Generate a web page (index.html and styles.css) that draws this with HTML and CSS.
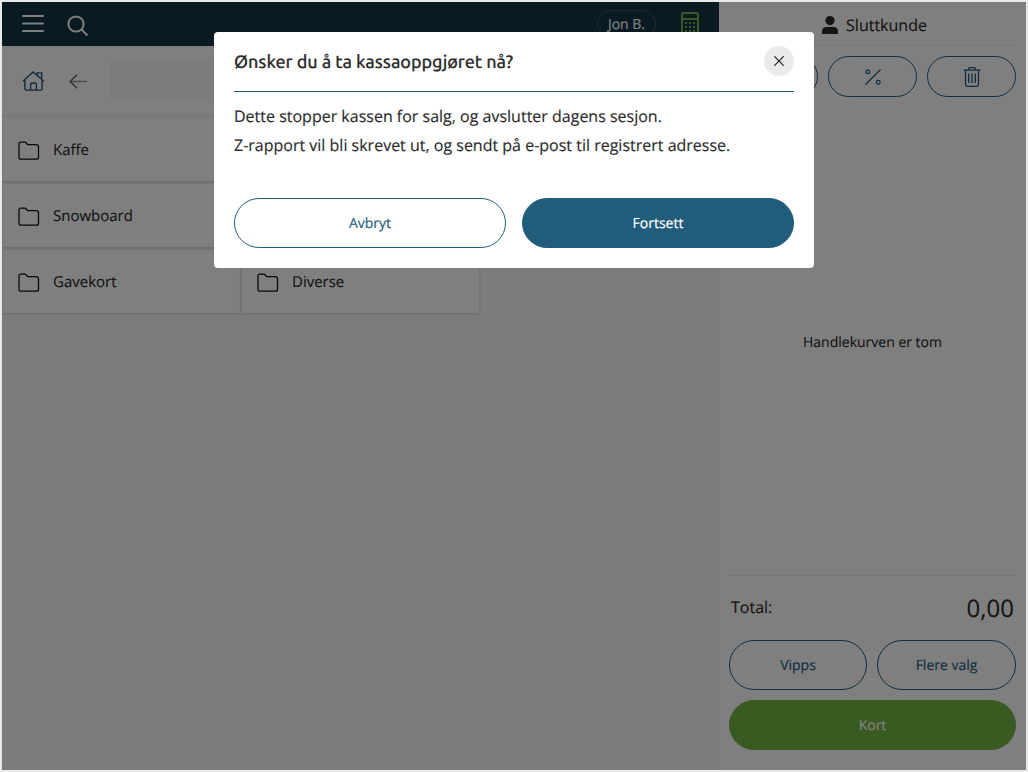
FILE: index.html
```html
<!DOCTYPE html>
<html lang="no">
<head>
<meta charset="utf-8">
<title>Kasse</title>
<link rel="stylesheet" href="styles.css">
</head>
<body>
<div class="app">
  <main class="shop">
    <header class="topbar">
      <svg class="menu" viewBox="0 0 22 20"><path d="M1 2h20M1 9.500h20M1 17h20"/></svg>
      <svg class="search" viewBox="0 0 22 22"><circle cx="9" cy="9" r="7.600"/><path d="M14.500 14.500L20.500 20.500"/></svg>
      <span class="user">Jon B.</span>
      <svg class="register" viewBox="0 0 18 24"><rect x="1" y="1" width="16" height="22" rx="1.500"/><path d="M1 7h16"/><path class="keys" d="M4 11h10M4 15h10M4 19h10"/></svg>
    </header>
    <nav class="toolbar">
      <svg class="home" viewBox="0 0 24 22"><path d="M1 11.200L11.500 1.500L23 11.200M3 10v9.200q0 1.300 1.300 1.300h15.400q1.300 0 1.300-1.300V10M9 20.500v-6q0-1.500 1.500-1.500h3q1.500 0 1.500 1.500v6M16 5V2.500h4.500v6"/></svg>
      <svg class="back" viewBox="0 0 18 15"><path class="shaft" d="M18 7.500H1"/><path d="M8 .8L1 7.500l7 6.700"/></svg>
      <div class="field"></div>
    </nav>
    <section class="tiles">
      <div class="tile wide"><svg class="folder" viewBox="0 0 22 20"><path d="M1 16.500V3Q1 1.200 2.800 1.200h3.800q1 0 1.700.800l1 1.200q.500.500 1.200.500h7.700q2.300 0 2.300 2.300v10.200q0 2-2 2H3q-2 0-2-1.700z"/></svg><span>Kaffe</span></div>
      <div class="tile wide"><svg class="folder" viewBox="0 0 22 20"><path d="M1 16.500V3Q1 1.200 2.800 1.200h3.800q1 0 1.700.800l1 1.200q.500.500 1.200.500h7.700q2.300 0 2.300 2.300v10.200q0 2-2 2H3q-2 0-2-1.700z"/></svg><span>Snowboard</span></div>
      <div class="tile"><svg class="folder" viewBox="0 0 22 20"><path d="M1 16.500V3Q1 1.200 2.800 1.200h3.800q1 0 1.700.800l1 1.200q.500.500 1.200.500h7.700q2.300 0 2.300 2.300v10.200q0 2-2 2H3q-2 0-2-1.700z"/></svg><span>Gavekort</span></div>
      <div class="tile"><svg class="folder" viewBox="0 0 22 20"><path d="M1 16.500V3Q1 1.200 2.800 1.200h3.800q1 0 1.700.800l1 1.200q.500.500 1.200.500h7.700q2.300 0 2.300 2.300v10.200q0 2-2 2H3q-2 0-2-1.700z"/></svg><span>Diverse</span></div>
    </section>
  </main>
  <aside class="cart">
    <div class="customer">
      <svg class="person" viewBox="0 0 16 18"><circle cx="8" cy="4.600" r="4.600"/><path d="M0 18v-2.500Q0 11 4.500 11h7Q16 11 16 15.500V18z"/></svg>Sluttkunde
    </div>
    <div class="actions">
      <button class="pill"></button>
      <button class="pill"><svg class="percent" viewBox="0 0 16 16"><path d="M.5 15.500L15.500.500"/><circle cx="2.800" cy="2.800" r="1.900"/><circle cx="13.200" cy="13.200" r="1.900"/></svg></button>
      <button class="pill"><svg class="trash" viewBox="0 0 18 20"><path d="M.5 3.200h17M5.500 3V2Q5.500.700 6.800.700h4.400q1.300 0 1.300 1.300v1M2.500 3.500v14q0 1.800 1.800 1.800h9.400q1.800 0 1.800-1.800v-14M5.700 6.500v9.500M9 6.500v9.500M12.300 6.500v9.500"/></svg></button>
    </div>
    <div class="empty">Handlekurven er tom</div>
    <div class="total"><span class="label">Total:</span><span class="sum">0,00</span></div>
    <div class="payments">
      <button class="pill">Vipps</button>
      <button class="pill">Flere valg</button>
      <button class="pill pay">Kort</button>
    </div>
  </aside>
  <div class="overlay">
    <div class="dialog">
      <div class="dialog-head">
        <h1 class="title">Ønsker du å ta kassaoppgjøret nå?</h1>
        <button class="close"><svg viewBox="0 0 10 10"><path d="M.3.3l9.400 9.400M9.700.3L.3 9.700"/></svg></button>
      </div>
      <div class="message">
        <p>Dette stopper kassen for salg, og avslutter dagens sesjon.</p>
        <p>Z-rapport vil bli skrevet ut, og sendt på e-post til registrert adresse.</p>
      </div>
      <div class="choices">
        <button class="pill">Avbryt</button>
        <button class="pill primary">Fortsett</button>
      </div>
    </div>
  </div>
</div>
</body>
</html>
```
FILE: styles.css
```css
* { box-sizing: border-box; }
body {
  margin: 0;
  padding: 2px;
  background: #e9eaea;
  font-family: "Open Sans", "Noto Sans", sans-serif;
  color: #2b2b2b;
  text-rendering: geometricPrecision;
  -webkit-text-stroke: .15px currentColor;
}
svg { display: block; fill: none; stroke: currentColor; flex: none; }
.app {
  position: relative;
  display: flex;
  width: 1024px;
  height: 768px;
  overflow: hidden;
  background: #f8f8f8;
}
.shop { width: 717px; }
.topbar {
  display: flex;
  align-items: center;
  height: 44px;
  padding: 0 20px;
  background: #143546;
  color: #fff;
}
.menu { width: 22px; height: 20px; stroke-width: 2; stroke-linecap: round; }
.search { width: 22px; height: 22px; margin: 4px auto 0 23px; stroke-width: 2; }
.user {
  height: 28px;
  width: 59px;
  margin-right: 25px;
  border: 1px solid #215d7b;
  border-radius: 14px;
  font-size: 14px;
  line-height: 27px;
  text-align: center;
}
.register { width: 18px; height: 24px; color: #73b543; stroke-width: 2; }
.keys { stroke-dasharray: 2 2; }
.toolbar {
  display: flex;
  align-items: center;
  height: 69px;
  padding: 2px 0 0 20px;
  background: #fff;
  border-bottom: 1px solid #f0f0f0;
}
.home { width: 23px; height: 22px; color: #215d7b; stroke-width: 1.500; }
.back { width: 18px; height: 15px; margin: 0 23px 0 24px; color: #555; stroke-width: 1.200; }
.shaft { stroke: #999; stroke-width: 1.500; }
.field { width: 360px; height: 44px; margin-top: -3px; border-radius: 4px; background: #f8f8f8; }
.tiles {
  display: grid;
  grid-template-columns: 237px 237px;
  grid-auto-rows: 63px;
  gap: 3px 2px;
  padding: 3px 1px;
}
.tile {
  display: flex;
  align-items: center;
  gap: 13.500px;
  padding: 0 0 0 14.500px;
  background: #fff;
  box-shadow: 0 1px 3px #ccc;
  font-size: 15px;
}
.wide { grid-column: 1 / 3; }
.folder { width: 22px; height: 20px; margin-top: 3px; color: #111; stroke-width: 1.300; }
.cart {
  display: flex;
  flex-direction: column;
  width: 307px;
  padding: 0 10px 20px;
  background: #fff;
}
.customer {
  display: flex;
  justify-content: center;
  align-items: center;
  gap: 8px;
  height: 44px;
  padding: 2px 0 0 4px;
  border-bottom: 1px solid #eee;
  font-size: 16px;
}
.person { width: 16px; height: 18px; fill: currentColor; stroke: none; }
.pill {
  display: flex;
  align-items: center;
  justify-content: center;
  border: 1px solid #215d7b;
  border-radius: 25px;
  padding: 0;
  background: #fff;
  color: #215d7b;
  font: 14px "Open Sans", "Noto Sans", sans-serif;
  text-rendering: geometricPrecision;
}
.actions { display: grid; grid-template-columns: repeat(3, 89px); gap: 10px; margin-top: 10px; justify-content: end; }
.actions .pill { height: 41px; }
.percent { width: 16px; height: 16px; stroke-width: 1.200; }
.trash { width: 18px; height: 20px; stroke-width: 1.300; }
.empty {
  display: flex;
  flex: 1;
  align-items: center;
  justify-content: center;
  padding-top: 13px;
  font-size: 14px;
}
.total {
  display: flex;
  align-items: center;
  justify-content: space-between;
  height: 65px;
  padding: 0 2px;
  border-top: 1px solid #eee;
  font-size: 16px;
}
.label { padding-bottom: 2px; }
.sum { font-size: 24px; }
.payments { display: grid; grid-template-columns: 138px 139px; grid-auto-rows: 50px; gap: 10px; }
.pay { grid-column: 1 / 3; border-color: #72b443; background: #72b443; color: #fff; }
.overlay {
  position: absolute;
  inset: 0;
  display: flex;
  align-items: flex-start;
  justify-content: center;
  padding-top: 30px;
  background: rgba(0, 0, 0, .5);
}
.dialog { width: 600px; height: 236px; padding: 0 20px; border-radius: 4px; background: #fff; }
.dialog-head {
  display: flex;
  align-items: center;
  justify-content: space-between;
  height: 60px;
  padding-bottom: 2px;
  border-bottom: 1px solid #215d7b;
}
.title { margin: 0; padding-top: 2px; font: 500 18px Ubuntu, "Noto Sans", sans-serif; letter-spacing: -.06px; }
.close {
  display: flex;
  align-items: center;
  justify-content: center;
  width: 30px;
  height: 30px;
  padding: 0;
  border: 0;
  border-radius: 50%;
  background: #eaeaea;
  color: #222;
}
.close svg { width: 10px; height: 10px; stroke-width: 1.200; }
.message { height: 106px; padding-top: 10px; font-size: 16px; line-height: 29px; }
.message p { margin: 0; }
.choices { display: grid; grid-template-columns: 1fr 1fr; grid-auto-rows: 50px; gap: 16px; }
.primary { background: #215d7b; color: #fff; }
```
